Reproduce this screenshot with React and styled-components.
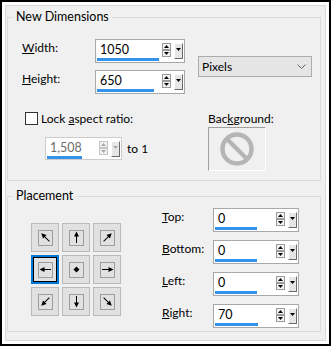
import React from 'react'
import styled, { createGlobalStyle } from 'styled-components'

const GlobalStyle = createGlobalStyle`
  html, body {
    margin: 0;
    padding: 0;
    background: #fff;
  }
  body {
    font-family: Lato, "Noto Sans", sans-serif;
    font-size: 12px;
    color: #000;
  }
  * {
    box-sizing: border-box;
  }
`

const Window = styled.div`
  width: 331px;
  height: 346px;
  border: 2px solid #000;
  background: #fff;
  padding: 3px;
`

const Panel = styled.div`
  height: 100%;
  border: 1px solid #d9d9d9;
  background: #f0f0f0;
  padding: 3px 4px 0 1px;
  display: flex;
  flex-direction: column;
  gap: 7px;
`

const Group = styled.fieldset`
  margin: 0;
  padding: 0;
  min-width: 0;
  border: 1px solid #dcdcdc;
`

const Legend = styled.legend`
  margin-left: 5px;
  padding: 0 3px;
  line-height: 16px;
  font-size: 12.5px;
`

const DimBody = styled.div`
  padding: 14px 8px 9px 14px;
  display: flex;
  flex-direction: column;
`

const TopRow = styled.div`
  display: flex;
  align-items: center;
  gap: 13px;
`

const Fields = styled.div`
  display: flex;
  flex-direction: column;
  gap: ${p => p.gap || 7}px;
`

const FieldRow = styled.div`
  display: flex;
  align-items: flex-start;
`

const Label = styled.div`
  width: ${p => p.width}px;
  line-height: 17px;
  white-space: nowrap;
`

const SpinBox = styled.div`
  display: flex;
  align-items: flex-start;
  width: ${p => p.width}px;
  height: ${p => p.height || 24}px;
  border: 1px solid ${p => (p.disabled ? '#cccccc' : '#a8a8a8')};
  background: #fff;
  color: ${p => (p.disabled ? '#6d6d6d' : '#000')};
  font-size: 12.5px;
`

const ValueArea = styled.div`
  flex: 1;
  padding-left: 1px;
`

const ValueText = styled.div`
  padding: 2px 0 0 3px;
  line-height: 16px;
  height: 18px;
`

const Bar = styled.div`
  height: 3px;
  background: #3393eb;
`

const Arrows = styled.div`
  margin-top: 3px;
  width: 9px;
  display: flex;
  flex-direction: column;
`

const ArrowCell = styled.div`
  height: 7px;
  border: 1px solid ${p => (p.disabled ? '#c4c4c4' : '#9a9a9a')};
  background: #f4f4f4;
  display: flex;
  align-items: center;
  justify-content: center;
`

const DropBtn = styled.div`
  margin: 3px 1px 0 3px;
  width: 9px;
  height: 16px;
  background: #e6e6e6;
  border-top: 1px solid #fff;
  border-left: 1px solid #fff;
  border-right: 1px solid #6a6a6a;
  border-bottom: 1px solid #6a6a6a;
  display: flex;
  justify-content: center;
  padding-top: 4px;
`

const Tri = ({ dir = 'down', color = '#000' }) => (
  <svg width="5" height="3" viewBox="0 0 5 3" style={{ display: 'block' }}>
    {dir === 'up'
      ? <polygon points="2.5,0 5,3 0,3" fill={color} />
      : <polygon points="0,0 5,0 2.5,3" fill={color} />}
  </svg>
)

const Spin = ({ value, bar, width, height, disabled }) => {
  const c = disabled ? '#a8a8a8' : '#000'
  return (
    <SpinBox width={width} height={height} disabled={disabled}>
      <ValueArea>
        <ValueText>{value}</ValueText>
        <Bar style={{ width: bar }} />
      </ValueArea>
      <Arrows>
        <ArrowCell disabled={disabled}><Tri dir="up" color={c} /></ArrowCell>
        <ArrowCell disabled={disabled}><Tri dir="down" color={c} /></ArrowCell>
      </Arrows>
      <DropBtn><Tri color={c} /></DropBtn>
    </SpinBox>
  )
}

const Select = styled.div`
  width: 117px;
  height: 21px;
  border: 1px solid #adadad;
  background: #e5e5e5;
  display: flex;
  align-items: center;
  justify-content: space-between;
  padding: 0 5px 0 3px;
  line-height: 17px;
`

const BottomRow = styled.div`
  display: flex;
  margin-top: 16px;
`

const LockCol = styled.div`
  width: 186px;
  display: flex;
  flex-direction: column;
`

const LockRow = styled.label`
  display: flex;
  align-items: flex-start;
  margin-left: 3px;
  line-height: 17px;
  gap: 3px;
`

const Check = styled.span`
  margin-top: 2px;
  width: 13px;
  height: 13px;
  border: 1px solid #333;
  background: #fff;
`

const RatioRow = styled.div`
  display: flex;
  align-items: center;
  margin: 10px 0 0 23px;
  gap: 5px;
`

const BgCol = styled.div`
  display: flex;
  flex-direction: column;
`

const BgBox = styled.div`
  width: 58px;
  height: 44px;
  border-top: 1px solid #a0a0a0;
  border-left: 1px solid #a0a0a0;
  border-right: 1px solid #fff;
  border-bottom: 1px solid #fff;
  display: flex;
  align-items: center;
  justify-content: center;
`

const PlaceBody = styled.div`
  display: flex;
  padding: 0 0 3px 23px;
`

const Grid = styled.div`
  margin-top: 19px;
  display: grid;
  grid-template-columns: repeat(3, 28px);
  grid-auto-rows: 29px;
  gap: 3px;
  align-self: flex-start;
`

const PosButton = styled.div`
  background: #e1e1e1;
  border: ${p => (p.selected ? '2px solid #0078d7' : '1px solid #b9b9b9')};
  box-shadow: ${p => (p.selected ? 'inset 0 0 0 1px #000' : 'none')};
  display: flex;
  align-items: center;
  justify-content: center;
`

const PosInner = styled.div`
  width: 15px;
  height: 16px;
  border: 1px solid #9d9d9d;
  display: flex;
  align-items: center;
  justify-content: center;
`

const Margins = styled.div`
  margin: 4px 0 0 41px;
`

const NoSign = () => (
  <svg width="36" height="36" viewBox="0 0 36 36">
    <circle cx="18" cy="18" r="14.5" fill="none" stroke="#b5b5b5" strokeWidth="4.5" />
    <line x1="8" y1="8" x2="28" y2="28" stroke="#b5b5b5" strokeWidth="4.5" />
  </svg>
)

const Chevron = () => (
  <svg width="9" height="6" viewBox="0 0 9 6">
    <polyline points="0.5,0.5 4.5,4.5 8.5,0.5" fill="none" stroke="#606060" strokeWidth="1" />
  </svg>
)

const PosArrow = ({ angle }) => (
  <svg width="13" height="13" viewBox="0 0 13 13">
    {angle === null ? (
      <polygon points="6.5,3.5 9.5,6.5 6.5,9.5 3.5,6.5" fill="#000" />
    ) : (
      <g transform={`rotate(${angle} 6.5 6.5)`}>
        <line x1="6.5" y1="12" x2="6.5" y2="3" stroke="#000" strokeWidth="1" />
        <polygon points="6.5,0.5 4,5.5 9,5.5" fill="#000" />
      </g>
    )}
  </svg>
)

const positions = [
  { angle: -45 }, { angle: 0 }, { angle: 45 },
  { angle: -90, selected: true }, { angle: null }, { angle: 90 },
  { angle: -135 }, { angle: 180 }, { angle: 135 },
]

const margins = [
  { key: 'T', rest: 'op:', value: '0', bar: 42 },
  { key: 'B', rest: 'ottom:', value: '0', bar: 42 },
  { key: 'L', rest: 'eft:', value: '0', bar: 42 },
  { key: 'R', rest: 'ight:', value: '70', bar: 43 },
]

export default function App() {
  return (
    <>
      <GlobalStyle />
      <Window>
        <Panel>
          <Group>
            <Legend>New Dimensions</Legend>
            <DimBody>
              <TopRow>
                <Fields>
                  <FieldRow>
                    <Label width={73}><u>W</u>idth:</Label>
                    <Spin value="1050" bar={62} width={90} />
                  </FieldRow>
                  <FieldRow>
                    <Label width={73}><u>H</u>eight:</Label>
                    <Spin value="650" bar={57} width={90} />
                  </FieldRow>
                </Fields>
                <Select>
                  <span>Pixels</span>
                  <Chevron />
                </Select>
              </TopRow>
              <BottomRow>
                <LockCol>
                  <LockRow>
                    <Check />
                    <span>Lock <u>a</u>spect ratio:</span>
                  </LockRow>
                  <RatioRow>
                    <Spin value="1,508" bar={35} width={77} height={23} disabled />
                    <span>to 1</span>
                  </RatioRow>
                </LockCol>
                <BgCol>
                  <Label>Bac<u>k</u>ground:</Label>
                  <BgBox><NoSign /></BgBox>
                </BgCol>
              </BottomRow>
            </DimBody>
          </Group>
          <Group>
            <Legend>Placement</Legend>
            <PlaceBody>
              <Grid>
                {positions.map((p, i) => (
                  <PosButton key={i} selected={p.selected}>
                    <PosInner><PosArrow angle={p.angle} /></PosInner>
                  </PosButton>
                ))}
              </Grid>
              <Margins>
                <Fields gap={8}>
                  {margins.map(m => (
                    <FieldRow key={m.key}>
                      <Label width={51}><u>{m.key}</u>{m.rest}</Label>
                      <Spin value={m.value} bar={m.bar} width={86} />
                    </FieldRow>
                  ))}
                </Fields>
              </Margins>
            </PlaceBody>
          </Group>
        </Panel>
      </Window>
    </>
  )
}
